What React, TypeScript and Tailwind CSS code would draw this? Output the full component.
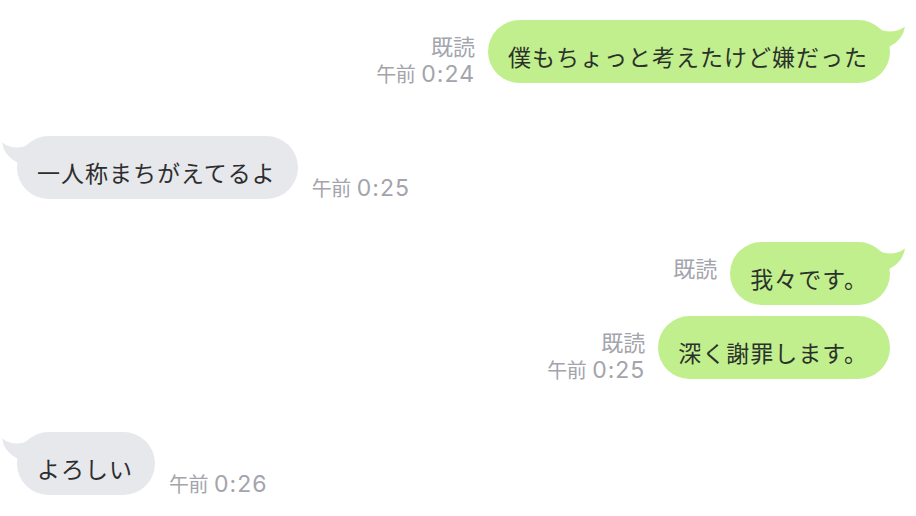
import React from "react";

const GREEN = "#c2ef8e";
const GRAY = "#e6e8eb";

function TailRight() {
  return (
    <svg
      className="absolute top-0 right-[-16px]"
      width="28"
      height="28"
      viewBox="0 0 28 28"
    >
      <path d="M0 9 L7 11 Q18 13 27 6.5 Q25 20 11 27 L0 27 Z" fill={GREEN} />
    </svg>
  );
}

function TailLeft() {
  return (
    <svg
      className="absolute top-0 left-[-16px]"
      width="28"
      height="28"
      viewBox="0 0 28 28"
    >
      <path d="M28 9 L21 11 Q10 13 1 6.5 Q3 20 17 27 L28 27 Z" fill={GRAY} />
    </svg>
  );
}

function Time({ t }: { t: string }) {
  const [ampm, hm] = t.split(" ");
  return (
    <div className="flex h-[26px] items-baseline leading-[26px] whitespace-nowrap text-[#a3a4ac]">
      <span className="text-[20px] tracking-[-0.5px] leading-[26px] font-['Noto_Sans_CJK_JP',sans-serif]">
        {ampm}
      </span>
      <span className="ml-[6px] text-[23px] tracking-[1px] leading-[26px] font-['Inter',sans-serif]">
        {hm}
      </span>
    </div>
  );
}

function Bubble({
  text,
  side,
  tail,
}: {
  text: string;
  side: "left" | "right";
  tail: boolean;
}) {
  return (
    <div
      className={
        "relative h-[63px] rounded-full pl-[20px] pr-[22px] pt-[24px] text-[23px] leading-[24px] tracking-[1px] whitespace-nowrap font-['Noto_Sans_CJK_JP',sans-serif] " +
        (side === "right"
          ? "bg-[#c2ef8e] text-[#2b322b]"
          : "bg-[#e6e8eb] text-[#2d2d2f]")
      }
    >
      {tail && (side === "right" ? <TailRight /> : <TailLeft />)}
      <span className="relative">{text}</span>
    </div>
  );
}

function RightRow({
  text,
  time,
  tail,
  className,
}: {
  text: string;
  time?: string;
  tail: boolean;
  className?: string;
}) {
  return (
    <div className={"flex h-[63px] items-start justify-end pr-[26px] " + (className ?? "")}>
      <div className="mr-[13px] flex flex-col items-end pt-[12px]">
        <div className="h-[26px] leading-[26px] text-[22px] text-[#a3a4ac] font-['Noto_Sans_CJK_JP',sans-serif]">
          既読
        </div>
        {time && (
          <div className="mt-[3px]">
            <Time t={time} />
          </div>
        )}
      </div>
      <Bubble text={text} side="right" tail={tail} />
    </div>
  );
}

function LeftRow({
  text,
  time,
  className,
}: {
  text: string;
  time: string;
  className?: string;
}) {
  return (
    <div className={"flex h-[63px] items-start pl-[17px] " + (className ?? "")}>
      <Bubble text={text} side="left" tail={true} />
      <div className="ml-[14px] pt-[39px]">
        <Time t={time} />
      </div>
    </div>
  );
}

export default function App() {
  return (
    <div className="w-[916px] h-[516px] overflow-hidden bg-white pt-[20px] flex flex-col">
      <RightRow text="僕もちょっと考えたけど嫌だった" time="午前 0:24" tail={true} />
      <LeftRow text="一人称まちがえてるよ" time="午前 0:25" className="mt-[53px]" />
      <RightRow text="我々です。" tail={true} className="mt-[43px]" />
      <RightRow text="深く謝罪します。" time="午前 0:25" tail={false} className="mt-[11px]" />
      <LeftRow text="よろしい" time="午前 0:26" className="mt-[53px]" />
    </div>
  );
}
